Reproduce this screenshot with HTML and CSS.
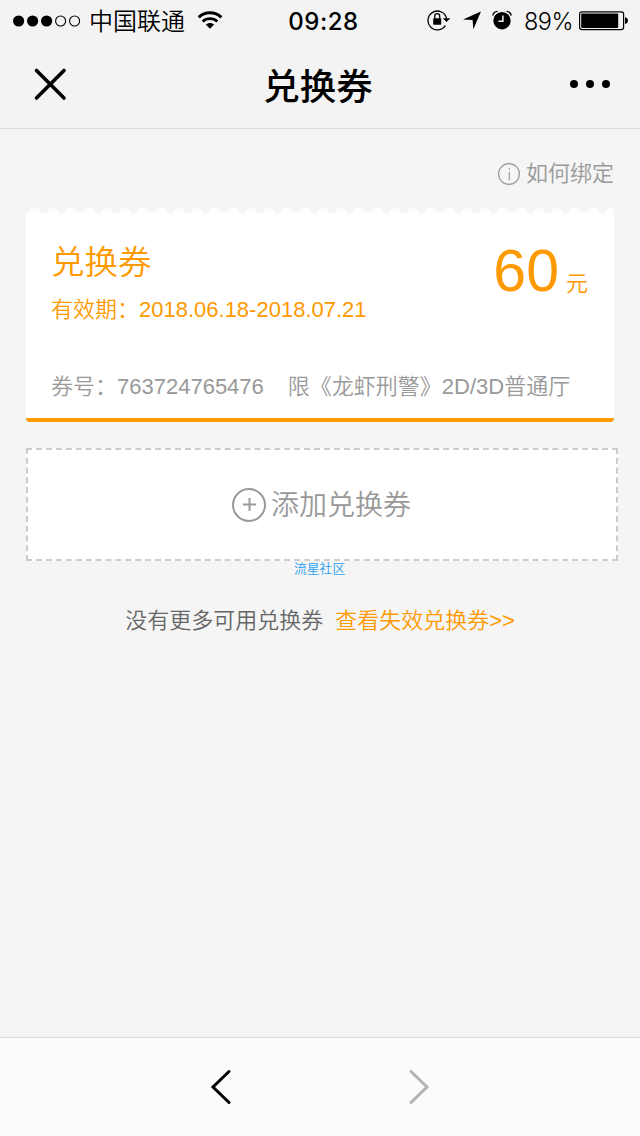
FILE: index.html
```html
<!DOCTYPE html>
<html lang="zh-CN">
<head>
  <meta charset="UTF-8">
  <title>兑换券</title>
  <link rel="stylesheet" href="styles.css">
</head>
<body>

<div class="top">
  <!-- 状态栏 -->
  <div class="status">
    <div class="status-left">
      <svg class="signal" width="68" height="12" viewBox="0 0 68 12">
        <circle cx="5.6" cy="6" r="5.6"/>
        <circle cx="19.6" cy="6" r="5.6"/>
        <circle cx="33.6" cy="6" r="5.6"/>
        <circle class="empty" cx="47.6" cy="6" r="5"/>
        <circle class="empty" cx="61.6" cy="6" r="5"/>
      </svg>
      <span class="carrier">中国联通</span>
      <svg class="wifi" width="26" height="20" viewBox="0 0 26 20">
        <path d="M1.7 7.4C8 1.3 18 1.3 24.3 7.4" fill="none" stroke="#000" stroke-width="3"/>
        <path d="M5.7 11.5C9.8 7.7 16.2 7.7 20.3 11.5" fill="none" stroke="#000" stroke-width="2.8"/>
        <path d="M8.8 14.6C11.2 12.5 14.8 12.5 17.2 14.6L13 18.8Z"/>
      </svg>
    </div>
    <div class="clock">09:28</div>
    <div class="status-right">
      <svg width="24" height="22" viewBox="0 0 24 22">
        <path d="M18.4 16.4A9.4 9.4 0 1 1 19.6 9.6" fill="none" stroke="#000" stroke-width="1.3"/>
        <path d="M15.8 9.2H23.3L19.6 13Z"/>
        <rect x="6.2" y="9.3" width="8" height="6.4" rx=".6"/>
        <path d="M7.7 9.5V7.2a2.5 2.5 0 0 1 5 0V9.5" fill="none" stroke="#000" stroke-width="1.3"/>
      </svg>
      <svg class="locate" width="18" height="19" viewBox="0 0 18 19">
        <path d="M18 0.5L10.3 18.3L9.6 9.1L0 8.4Z"/>
      </svg>
      <svg class="alarm" width="20" height="20" viewBox="0 0 20 20">
        <circle cx="10" cy="10.7" r="8.7"/>
        <path d="M.8 5.6C1.2 3 3 1.6 5.6 1.4M19.2 5.6C18.8 3 17 1.6 14.4 1.4" fill="none" stroke="#000" stroke-width="1.3"/>
        <path d="M10.9 5.6V11.3H6.4" fill="none" stroke="#f3f3f3" stroke-width="1.5"/>
      </svg>
      <span class="percent">89%</span>
      <svg class="battery" width="50" height="20" viewBox="0 0 50 20">
        <rect x=".6" y=".8" width="44" height="17.8" rx="2.4" fill="none" stroke="#000" stroke-width="1.2"/>
        <rect x="2.2" y="2.4" width="37" height="14.6" rx="1"/>
        <path d="M46 6.3C50 7 50 12.400 46 13.100Z"/>
      </svg>
    </div>
  </div>

  <!-- 标题栏 -->
  <div class="nav">
    <svg class="close" width="34" height="34" viewBox="0 0 34 34">
      <path d="M3.500 3.500L31 31M31 3.500L3.500 31"/>
    </svg>
    <h1>兑换券</h1>
    <div class="more"><i></i><i></i><i></i></div>
  </div>
</div>

<div class="main">
  <div class="help">
    <svg width="24" height="24" viewBox="0 0 24 24">
      <circle cx="12" cy="12" r="10.4"/>
      <path d="M12.300 10V18.300M12.300 6V7.600"/>
    </svg>
    <span>如何绑定</span>
  </div>

  <div class="coupon">
    <div class="coupon-body">
      <div class="coupon-head">
        <div>
          <div class="coupon-name">兑换券</div>
          <div class="coupon-date">有效期：2018.06.18-2018.07.21</div>
        </div>
        <div class="price"><b>60</b><span>元</span></div>
      </div>
      <div class="coupon-info">
        <span>券号：763724765476</span>
        <span>限《龙虾刑警》2D/3D普通厅</span>
      </div>
    </div>
  </div>

  <div class="add">
    <svg width="34" height="34" viewBox="0 0 34 34">
      <circle cx="17" cy="17" r="16"/>
      <path d="M11 16.500H24M17.500 10V23"/>
    </svg>
    <span>添加兑换券</span>
    <div class="mark">流星社区</div>
  </div>

  <div class="tips">
    <span>没有更多可用兑换券</span>
    <a>查看失效兑换券&gt;&gt;</a>
  </div>
</div>

<div class="toolbar">
  <svg width="22" height="36" viewBox="0 0 22 36"><path d="M19 2.500L3 18L19 33.500"/></svg>
  <svg class="off" width="22" height="36" viewBox="0 0 22 36"><path d="M3 2.500L19 18L3 33.500"/></svg>
</div>

</body>
</html>
```
FILE: styles.css
```css
* {
  box-sizing: border-box;
}

body {
  margin: 0;
  height: 1136px;
  display: flex;
  flex-direction: column;
  background: #f5f5f5;
  font-family: "Liberation Sans", "Noto Sans CJK SC", sans-serif;
  font-weight: 350;
  font-size: 22px;
  overflow: hidden;
}

svg {
  display: block;
  flex: none;
}

/* 顶部 */
.top {
  height: 129px;
  background: #f3f3f3;
  border-bottom: 1px solid #dadada;
}

.status {
  height: 40px;
  display: grid;
  grid-template-columns: 1fr auto 1fr;
  align-items: center;
  padding: 0 11px 0 13px;
  font-family: Inter, "Noto Sans CJK SC", sans-serif;
}

.status-left,
.status-right {
  height: 40px;
  display: flex;
  align-items: center;
}

.status-right {
  justify-content: flex-end;
}

.signal {
  margin-top: 1px;
}

.signal .empty {
  fill: none;
  stroke: #000;
  stroke-width: 1.1;
}

.carrier {
  margin: 3px 0 0 8px;
  font-size: 24px;
  line-height: 40px;
}

.wifi {
  margin-left: 12px;
}

.clock {
  margin: 2px 0 0 5px;
  font-size: 24px;
  font-weight: 550;
  letter-spacing: 0.5px;
}

.locate {
  margin-left: 12px;
}

.alarm {
  margin-left: 11px;
}

.percent {
  margin: 2px 0 0 12px;
  font-size: 23.5px;
  font-weight: 350;
  letter-spacing: -0.5px;
}

.battery {
  margin: 1px 0 0 6px;
}

.nav {
  height: 88px;
  display: grid;
  grid-template-columns: 1fr auto 1fr;
  align-items: center;
  padding: 0 30px 0 33px;
}

.close path {
  stroke: #000;
  stroke-width: 3.6;
  stroke-linecap: round;
}

.nav h1 {
  margin: 8px 7px 0 0;
  font-size: 36.5px;
  font-weight: 500;
  line-height: 80px;
}

.more {
  display: flex;
  justify-content: flex-end;
  gap: 8px;
}

.more i {
  width: 8px;
  height: 8px;
  border-radius: 50%;
  background: #000;
}

/* 内容 */
.main {
  flex: 1;
  padding: 28px 22px 0 26px;
}

.help {
  height: 32px;
  display: flex;
  justify-content: flex-end;
  align-items: center;
  gap: 5px;
  margin-right: 4px;
  color: #999;
}

.help svg {
  margin-top: 1px;
  fill: none;
  stroke: #999;
  stroke-width: 1.2;
}

.help span {
  margin-top: -4px;
}

.coupon {
  width: 588px;
  margin-top: 18px;
  padding-top: 6px;
  background: radial-gradient(circle at 9px 6px, #fdfdfd 5.2px, transparent 6.3px) 0 0 / 18px 6px repeat-x;
}

.coupon-body {
  height: 209px;
  padding: 26px 26px 0 25px;
  background: #fff;
  border-bottom: 4px solid #ff9900;
  border-radius: 0 0 4px 4px;
}

.coupon-head {
  display: flex;
  justify-content: space-between;
  color: #ff9900;
}

.coupon-name {
  font-size: 33.5px;
  line-height: 48px;
}

.coupon-date {
  line-height: 46px;
}

.price {
  display: flex;
  align-items: baseline;
  gap: 7px;
  line-height: 64px;
}

.price b {
  font-size: 59px;
  font-weight: 400;
}

.coupon-info {
  display: flex;
  gap: 24px;
  margin-top: 38px;
  line-height: 32px;
  color: #999;
  white-space: nowrap;
}

.add {
  position: relative;
  height: 113px;
  display: flex;
  justify-content: center;
  align-items: center;
  gap: 5px;
  margin-top: 26px;
  padding-right: 1px;
  background: #fff;
  border: 2px dashed #ccc;
  font-size: 28px;
  color: #999;
}

.add span {
  margin-top: -3px;
}

.add svg {
  fill: none;
  stroke: #999;
  stroke-width: 2;
}

.mark {
  position: absolute;
  top: 111px;
  left: 266px;
  font-size: 12.8px;
  line-height: 16px;
  color: #2ba0f0;
}

.tips {
  display: flex;
  justify-content: center;
  gap: 12px;
  margin-top: 44px;
  padding-right: 4px;
  line-height: 32px;
  color: #666;
}

.tips a {
  color: #ff9900;
}

/* 底部 */
.toolbar {
  height: 99px;
  display: flex;
  justify-content: center;
  align-items: center;
  gap: 176px;
  background: #fbfbfe;
  border-top: 1px solid #dadada;
}

.toolbar path {
  fill: none;
  stroke: #000;
  stroke-width: 3;
  stroke-linecap: round;
}

.toolbar .off path {
  stroke: #b2b2b2;
}
```
